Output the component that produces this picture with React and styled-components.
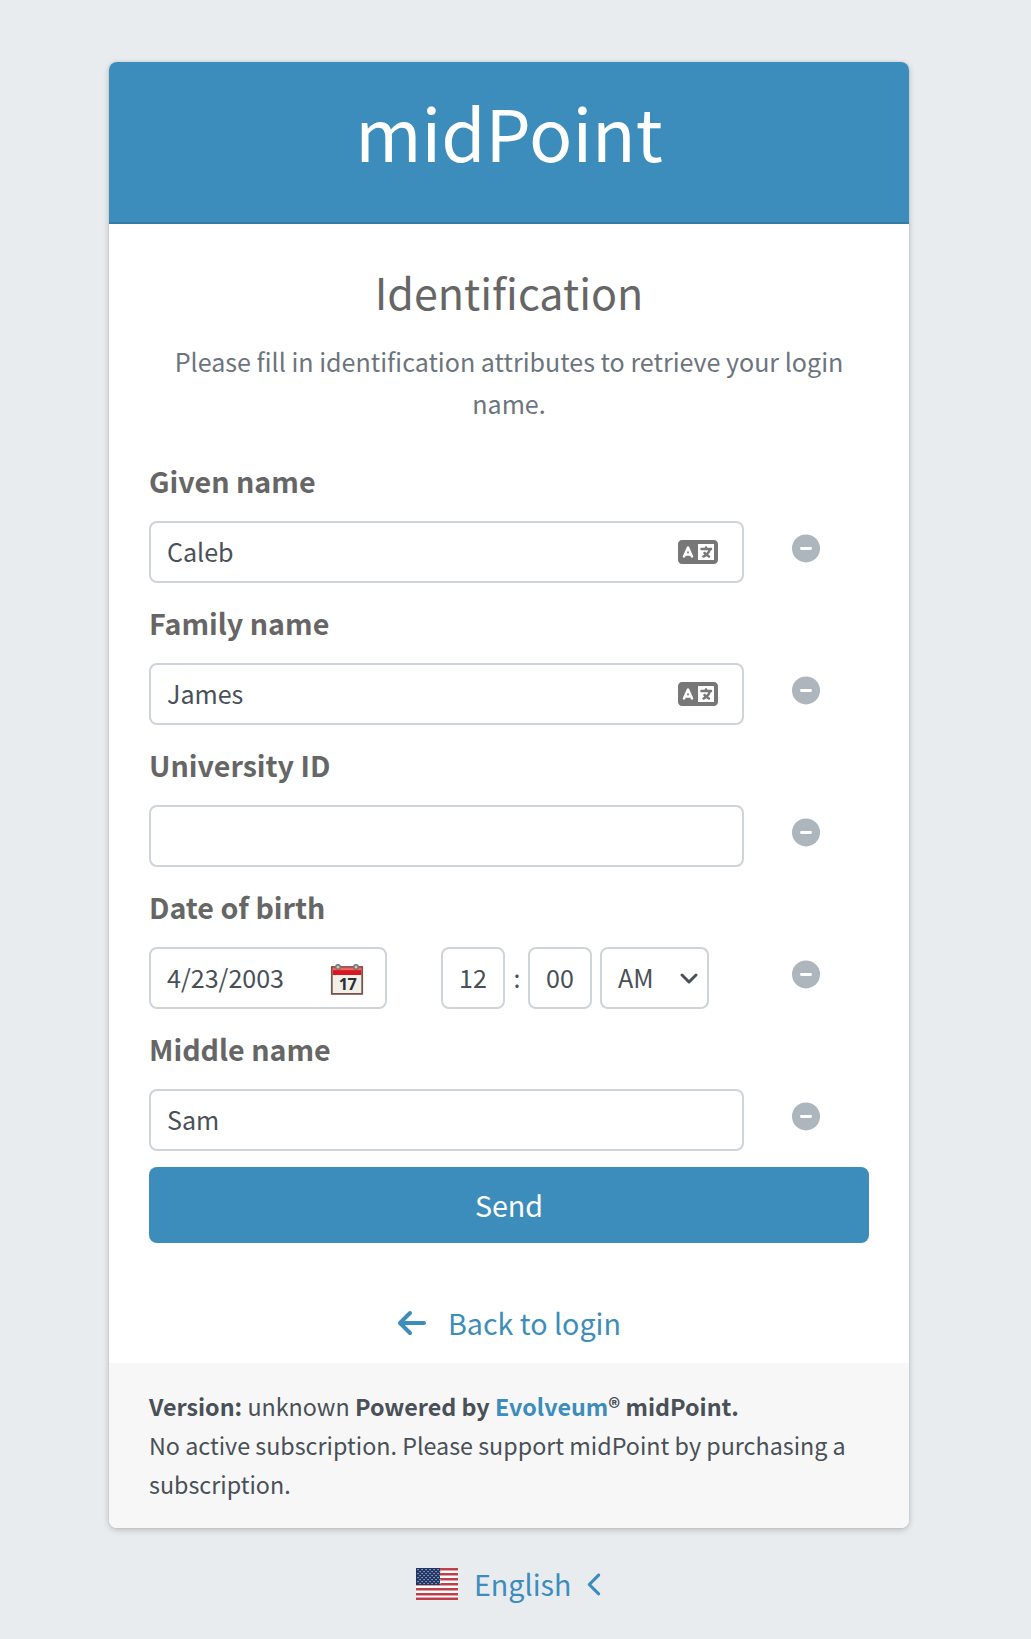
import React from 'react';
import styled, { createGlobalStyle } from 'styled-components';
import { FaLanguage, FaArrowLeft, FaChevronLeft } from 'react-icons/fa6';

const GlobalStyle = createGlobalStyle`
  *, *::before, *::after { box-sizing: border-box; }
  body {
    margin: 0;
    background: #e9ecef;
    color: #495057;
    font-family: "Noto Sans CJK SC", "Noto Sans CJK JP", "Open Sans", sans-serif;
    font-size: 25.07px;
  }
  input, select, button { font: inherit; color: inherit; }
  a { color: #3c8dbc; text-decoration: none; }
`;

const Page = styled.main`
  min-height: 1639px;
  padding-top: 62px;
  padding-left: 109px;
`;

const Card = styled.section`
  width: 800px;
  border-radius: 8px;
  overflow: hidden;
  background: #fff;
  box-shadow: 0 0 2px rgba(0, 0, 0, 0.125), 0 2px 6px rgba(0, 0, 0, 0.2);
`;

const Header = styled.header`
  height: 162px;
  padding-top: 21px;
  background: #3c8dbc;
  border-bottom: 2px solid #357ba5;
  color: #fff;
  text-align: center;
  font-size: 71.6px;
  line-height: 96px;
`;

const Body = styled.form`
  height: 1139px;
  padding: 38px 40px 0;
`;

const Title = styled.h1`
  margin: 0;
  color: #666;
  font-size: 43px;
  font-weight: 400;
  line-height: 58px;
  text-align: center;
`;

const Message = styled.p`
  margin: 20px 0 33px;
  color: #6c757d;
  line-height: 42px;
  text-align: center;
`;

const Field = styled.div`
  display: grid;
  grid-template-columns: 595px 1fr;
  grid-template-rows: 48px 62px;
  row-gap: 16px;
  margin-bottom: 16px;
`;

const Label = styled.label`
  grid-column: 1 / -1;
  color: #666;
  font-size: 28.65px;
  font-weight: 700;
  line-height: 48px;
`;

const Control = styled.div`
  display: flex;
  align-items: center;
  width: ${(p) => p.$width || '100%'};
  height: 62px;
  padding: 0 ${(p) => p.$end ?? 16}px 0 16px;
  border: 2px solid #ced4da;
  border-radius: 8px;
  background: #fff;
`;

const Input = styled.input`
  flex: 1;
  min-width: 0;
  height: 42px;
  margin-bottom: 2px;
  padding: 0;
  border: 0;
  outline: 0;
  background: transparent;
  line-height: 42px;
`;

const Select = styled.select`
  flex: 1;
  height: 42px;
  margin-bottom: 2px;
  padding: 0;
  border: 0;
  outline: 0;
  appearance: none;
  background: transparent;
  line-height: 42px;
`;

const LanguageIcon = styled(FaLanguage)`
  width: 40px;
  height: 32px;
  color: #777;
`;

const Remove = styled.button`
  display: flex;
  margin: 13px 0 0 48px;
  width: 29px;
  height: 29px;
  padding: 0;
  border: 0;
  background: none;
  color: #adb5bd;
`;

const DateRow = styled.div`
  display: flex;
  align-items: center;
`;

const TimeGroup = styled.div`
  display: flex;
  align-items: center;
  margin-left: 54px;
`;

const Colon = styled.span`
  width: 23px;
  padding-left: 1px;
  margin-bottom: 3px;
  text-align: center;
  line-height: 42px;
`;

const SelectBox = styled.div`
  margin-left: 8px;
`;

const Send = styled.button`
  display: block;
  width: 100%;
  height: 76px;
  padding: 0 0 2px;
  border: 0;
  border-radius: 8px;
  background: #3c8dbc;
  color: #fff;
  font-size: 28.65px;
`;

const BackLink = styled.a`
  display: flex;
  align-items: center;
  justify-content: center;
  gap: 20.5px;
  margin-top: 56px;
  padding-right: 1.5px;
  font-size: 28.65px;
  line-height: 48px;
`;

const Footer = styled.footer`
  height: 165px;
  padding: 24px 40px 0;
  background: #f7f7f7;
  font-size: 23.3px;
  line-height: 39px;
`;

const Language = styled.a`
  display: flex;
  align-items: center;
  width: 800px;
  height: 48px;
  margin-top: 32px;
  padding-left: 307px;
  font-size: 28.65px;
`;

const LanguageName = styled.span`
  margin: 0 11.5px 2px 16px;
`;

function CalendarIcon() {
  return (
    <svg width="34" height="34" viewBox="0 0 34 34" aria-hidden="true">
      <rect x="1.8" y="6" width="30.4" height="26.9" fill="#f2efe8" stroke="#73564b" strokeWidth="1.8" />
      <rect x="2.7" y="6.6" width="28.6" height="7.4" fill="#d9161f" />
      <rect x="2.7" y="6.6" width="28.6" height="2.6" fill="#e8666a" />
      <circle cx="8" cy="6" r="2.2" fill="#cfcac4" stroke="#77736f" strokeWidth="1.4" />
      <circle cx="26" cy="6" r="2.2" fill="#cfcac4" stroke="#77736f" strokeWidth="1.4" />
      <text x="17.6" y="29.4" textAnchor="middle" fontFamily="Open Sans, sans-serif" fontSize="16.4" fontWeight="700" letterSpacing="-0.5" fill="#2b2f33">17</text>
    </svg>
  );
}

function ChevronDown() {
  return (
    <svg width="18" height="14" viewBox="0 0 18 14" fill="none" stroke="#495057" strokeWidth="2.9" aria-hidden="true">
      <path d="M2 4l7 7 7-7" strokeLinecap="round" strokeLinejoin="round" />
    </svg>
  );
}

const STARS = Array.from({ length: 8 }, (_, row) =>
  Array.from({ length: 6 }, (_, col) => [1.2 + col * 4 + (row % 2) * 2, 1.2 + row * 2])
).flat();

function Flag() {
  return (
    <svg width="42" height="32" viewBox="0 0 42 32" aria-hidden="true">
      <rect width="42" height="32" fill="#fff" />
      {[0, 5, 10, 15, 20, 25, 29.5].map((y) => (
        <rect key={y} y={y} width="42" height="2.5" fill="#bf3e49" />
      ))}
      <rect width="24" height="17" fill="#1f3566" />
      {STARS.map(([x, y]) => (
        <rect key={`${x}-${y}`} x={x} y={y} width="1.8" height="0.9" fill="#a7b0c6" />
      ))}
    </svg>
  );
}

function RemoveButton() {
  return (
    <Remove type="button" aria-label="Remove">
      <svg width="28" height="29" viewBox="0 0 28 29" aria-hidden="true">
        <circle cx="14" cy="14.4" r="14" fill="currentColor" />
        <rect x="8" y="13" width="12" height="3" rx="1.4" fill="#fff" />
      </svg>
    </Remove>
  );
}

function TextField({ id, label, value, translatable }) {
  return (
    <Field>
      <Label htmlFor={id}>{label}</Label>
      <Control $end={24}>
        <Input id={id} defaultValue={value} />
        {translatable && <LanguageIcon />}
      </Control>
      <RemoveButton />
    </Field>
  );
}

export default function App() {
  return (
    <>
      <GlobalStyle />
      <Page>
        <Card>
          <Header>midPoint</Header>
          <Body onSubmit={(e) => e.preventDefault()}>
            <Title>Identification</Title>
            <Message>Please fill in identification attributes to retrieve your login name.</Message>
            <TextField id="given" label="Given name" value="Caleb" translatable />
            <TextField id="family" label="Family name" value="James" translatable />
            <TextField id="university" label="University ID" value="" />
            <Field>
              <Label htmlFor="birth">Date of birth</Label>
              <DateRow>
                <Control $width="238px" $end={21}>
                  <Input id="birth" defaultValue="4/23/2003" />
                  <CalendarIcon />
                </Control>
                <TimeGroup>
                  <Control $width="64px">
                    <Input aria-label="Hours" defaultValue="12" />
                  </Control>
                  <Colon>:</Colon>
                  <Control $width="64px">
                    <Input aria-label="Minutes" defaultValue="00" />
                  </Control>
                  <SelectBox>
                    <Control $width="109px" $end={9}>
                      <Select aria-label="Period" defaultValue="AM">
                        <option>AM</option>
                        <option>PM</option>
                      </Select>
                      <ChevronDown />
                    </Control>
                  </SelectBox>
                </TimeGroup>
              </DateRow>
              <RemoveButton />
            </Field>
            <TextField id="middle" label="Middle name" value="Sam" />
            <Send type="submit">Send</Send>
            <BackLink href="#">
              <FaArrowLeft size={32} />
              <span>Back to login</span>
            </BackLink>
          </Body>
          <Footer>
            <b>Version:</b> unknown <b>Powered by <a href="#">Evolveum</a>® midPoint.</b>
            <br />
            No active subscription. Please support midPoint by purchasing a subscription.
          </Footer>
        </Card>
        <Language href="#">
          <Flag />
          <LanguageName>English</LanguageName>
          <FaChevronLeft size={25} />
        </Language>
      </Page>
    </>
  );
}
